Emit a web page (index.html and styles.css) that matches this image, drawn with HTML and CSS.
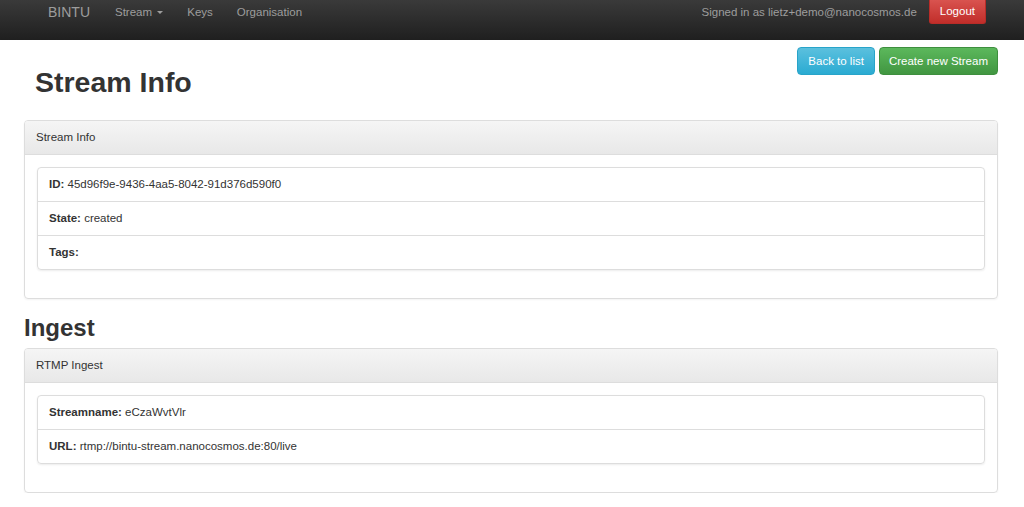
FILE: index.html
```html
<!DOCTYPE html>
<html lang="en">
<head>
  <meta charset="UTF-8" />
  <title>Stream Info - BINTU</title>
  <link rel="stylesheet" href="styles.css">
</head>
<body>
  <nav class="navbar">
    <div class="nav-left">
      <a class="brand" href="#">BINTU</a>
      <a class="nav-link" href="#">Stream <span class="caret"></span></a>
      <a class="nav-link" href="#">Keys</a>
      <a class="nav-link" href="#">Organisation</a>
    </div>
    <div class="nav-right">
      <span class="signed-in">Signed in as lietz+demo@nanocosmos.de</span>
      <a class="btn btn-logout" href="#">Logout</a>
    </div>
  </nav>

  <div class="container">
    <div class="page-header">
      <h1>Stream Info</h1>
      <div class="actions">
        <a class="btn btn-info" href="#">Back to list</a>
        <a class="btn btn-success" href="#">Create new Stream</a>
      </div>
    </div>

    <div class="panel">
      <div class="panel-heading">Stream Info</div>
      <div class="panel-body">
        <ul class="list-group">
          <li><b>ID:</b> 45d96f9e-9436-4aa5-8042-91d376d590f0</li>
          <li><b>State:</b> created</li>
          <li><b>Tags:</b></li>
        </ul>
      </div>
    </div>

    <h2>Ingest</h2>
    <div class="panel">
      <div class="panel-heading">RTMP Ingest</div>
      <div class="panel-body">
        <ul class="list-group">
          <li><b>Streamname:</b> eCzaWvtVlr</li>
          <li><b>URL:</b> rtmp://bintu-stream.nanocosmos.de:80/live</li>
        </ul>
      </div>
    </div>
  </div>
</body>
</html>
```

FILE: styles.css
```css
body {
  margin: 0;
  background: #fff;
  color: #333;
  font-family: "Liberation Sans", Arial, sans-serif;
  font-size: 11.5px;
}

a {
  text-decoration: none;
}

/* top bar */
.navbar {
  display: flex;
  justify-content: space-between;
  align-items: flex-start;
  height: 40px;
  padding: 0 38px 0 48px;
  background: linear-gradient(#3a3a3a, #1f1f1f);
}

.nav-left {
  display: flex;
  align-items: center;
  height: 24px;
}

.brand {
  color: #9d9d9d;
  font-size: 14px;
  margin-right: 25px;
}

.nav-link {
  color: #9d9d9d;
  margin-right: 24px;
}

.caret {
  display: inline-block;
  width: 0;
  height: 0;
  margin-left: 2px;
  vertical-align: middle;
  border-top: 3px solid #9d9d9d;
  border-left: 3px solid transparent;
  border-right: 3px solid transparent;
}

.nav-right {
  display: flex;
  align-items: center;
}

.signed-in {
  color: #9d9d9d;
  margin-right: 12px;
}

.btn {
  display: inline-block;
  color: #fff;
  line-height: 26px;
  padding: 0 10px;
  border: 1px solid transparent;
  border-radius: 4px;
}

.btn-logout {
  line-height: 23px;
  border-radius: 0 0 3px 3px;
  border-top: 0;
  background: linear-gradient(#d9534f, #c12e2a);
  border-color: #b92c28;
}

/* content */
.container {
  margin: 0 26px 0 24px;
}

.page-header {
  display: flex;
  justify-content: space-between;
  align-items: flex-start;
}

h1 {
  margin: 26px 0 22px 11px;
  font-size: 28.5px;
  line-height: 32px;
}

.actions {
  display: flex;
  gap: 4px;
  margin-top: 7px;
}

.btn-info {
  background: linear-gradient(#5bc0de, #2aabd2);
  border-color: #28a4c9;
}

.btn-success {
  padding: 0 9px;
  background: linear-gradient(#5cb85c, #419641);
  border-color: #3e8f3e;
}

h2 {
  margin: 16px 0 7px;
  font-size: 24px;
  line-height: 26px;
}

.panel {
  border: 1px solid #ddd;
  border-radius: 4px;
  box-shadow: 0 1px 2px rgba(0, 0, 0, 0.05);
}

.panel-heading {
  padding: 9px 11px;
  line-height: 15px;
  background: linear-gradient(#f5f5f5, #e8e8e8);
  border-bottom: 1px solid #ddd;
  border-radius: 3px 3px 0 0;
}

.panel-body {
  padding: 12px;
}

.list-group {
  list-style: none;
  margin: 0 0 16px;
  padding: 0;
  border: 1px solid #ddd;
  border-radius: 4px;
  box-shadow: 0 1px 2px rgba(0, 0, 0, 0.075);
}

.list-group li {
  padding: 9px 11px;
  line-height: 15px;
}

.list-group li + li {
  border-top: 1px solid #ddd;
}
```
